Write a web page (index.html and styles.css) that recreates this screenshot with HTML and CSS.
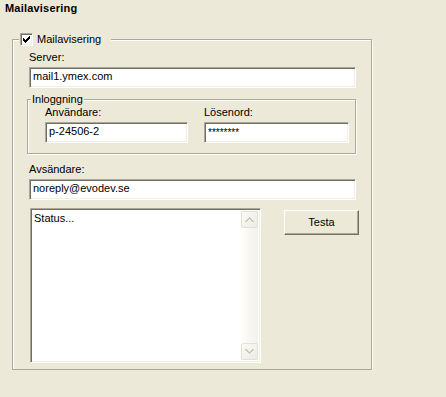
FILE: index.html
```html
<!DOCTYPE html>
<html lang="sv">
  <head>
    <meta charset="UTF-8" />
    <title>Mailavisering</title>
    <link rel="stylesheet" href="styles.css">
  </head>
  <body>
    <div class="title">Mailavisering</div>

    <fieldset class="group group-main">
      <legend class="check-legend">
        <span class="checkbox">
          <svg width="9" height="9" viewBox="0 0 9 9" shape-rendering="crispEdges">
            <path fill="#000" d="M1 3h1v3H1z M2 4h1v3H2z M3 5h1v3H3z M4 4h1v3H4z M5 3h1v3H5z M6 2h1v3H6z M7 1h1v3H7z" />
          </svg>
        </span>
        <span>Mailavisering</span>
      </legend>
      <div class="main-body">
        <div class="field-label">Server:</div>
        <div class="textbox wide">mail1.ymex.com</div>

        <fieldset class="group group-login">
          <legend class="plain-legend">Inloggning</legend>
          <div class="login-grid">
            <div class="login-col">
              <div class="field-label flush">Användare:</div>
              <div class="textbox">p-24506-2</div>
            </div>
            <div class="login-col">
              <div class="field-label flush">Lösenord:</div>
              <div class="textbox password">********</div>
            </div>
          </div>
        </fieldset>

        <div class="field-label gap-top">Avsändare:</div>
        <div class="textbox wide">noreply@evodev.se</div>

        <div class="bottom-row">
          <div class="status">
            <div class="status-text">Status...</div>
            <div class="scrollbar">
              <div class="scroll-btn">
                <svg width="9" height="6" viewBox="0 0 9 6" shape-rendering="crispEdges">
                  <path fill="#C9C7BA" d="M4 0h1v1H4z M3 1h3v1H3z M2 2h2v1H2z M5 2h2v1H5z M1 3h2v1H1z M6 3h2v1H6z M0 4h2v1H0z M7 4h2v1H7z" />
                </svg>
              </div>
              <div class="scroll-track"></div>
              <div class="scroll-btn">
                <svg width="9" height="6" viewBox="0 0 9 6" shape-rendering="crispEdges">
                  <path fill="#C9C7BA" d="M0 0h2v1H0z M7 0h2v1H7z M1 1h2v1H1z M6 1h2v1H6z M2 2h2v1H2z M5 2h2v1H5z M3 3h3v1H3z M4 4h1v1H4z" />
                </svg>
              </div>
            </div>
          </div>
          <button class="btn">Testa</button>
        </div>
      </div>
    </fieldset>
  </body>
</html>
```

FILE: styles.css
```css
body {
  margin: 0;
  background: #ece9d8;
  color: #000;
  font-family: "Liberation Sans", Arial, sans-serif;
  font-size: 11px;
  line-height: 13px;
}
.title {
  padding: 2px 0 0 5px;
  height: 13px;
  font-weight: bold;
  letter-spacing: 0.2px;
}

/* etched group boxes */
.group {
  box-sizing: border-box;
  margin: 0;
  padding: 0;
  border: 1px solid #aca899;
  box-shadow: inset 1px 1px 0 #fff, 1px 1px 0 #fff;
  min-inline-size: 0;
}
.group-main {
  width: 360px;
  margin: 18px 0 0 12px;
}
.group-login {
  width: 329px;
  margin-top: 5px;
}
.check-legend {
  display: flex;
  align-items: center;
  gap: 4px;
  height: 13px;
  margin-left: 6px;
  padding: 0 10px 0 1px;
  background: #ece9d8;
}
.plain-legend {
  margin-left: 3px;
  padding: 0 1px;
  background: #ece9d8;
}
.main-body {
  padding: 5px 0 6px 14px;
}
.login-grid {
  display: grid;
  grid-template-columns: 143px 145px;
  column-gap: 16px;
  padding: 0 6px 10px 17px;
}

/* sunken controls */
.checkbox,
.textbox,
.status {
  box-sizing: border-box;
  background: #fff;
  border: 1px solid;
  border-color: #aca899 #fff #fff #aca899;
  box-shadow: inset 1px 1px 0 #716f64, inset -1px -1px 0 #f1efe2;
}
.checkbox {
  display: block;
  width: 13px;
  height: 13px;
  padding: 1px;
}
.checkbox svg {
  display: block;
}
.field-label {
  margin-left: 2px;
}
.field-label.flush {
  margin-left: 0;
}
.field-label.gap-top {
  margin-top: 9px;
}
.textbox {
  height: 21px;
  margin-top: 3px;
  padding: 0 3px;
  line-height: 16px;
  white-space: nowrap;
  overflow: hidden;
}
.textbox.wide {
  width: 327px;
  margin-left: 2px;
}
.textbox.password {
  font-size: 10px;
  line-height: 19px;
}

.bottom-row {
  display: flex;
  align-items: flex-start;
  margin-top: 8px;
}
.status {
  display: flex;
  width: 231px;
  height: 155px;
  margin-left: 3px;
  padding: 2px;
}
.status-text {
  flex: 1;
  padding: 1px 1px;
}
.scrollbar {
  display: flex;
  flex-direction: column;
  width: 17px;
  background: linear-gradient(to right, #fdfdfa, #f3f1ec);
}
.scroll-track {
  flex: 1;
}
.scroll-btn {
  box-sizing: border-box;
  display: flex;
  align-items: center;
  justify-content: center;
  height: 17px;
  border: 1px solid #e3e1d7;
  border-radius: 2px;
  background: linear-gradient(to bottom right, #fbfbf8, #eceae1);
}
.btn {
  box-sizing: border-box;
  width: 75px;
  height: 25px;
  margin: 2px 0 0 23px;
  padding: 0;
  font: inherit;
  color: #000;
  background: #ece9d8;
  border: 1px solid;
  border-color: #fff #716f64 #716f64 #fff;
  box-shadow: inset -1px -1px 0 #aca899;
}
```
